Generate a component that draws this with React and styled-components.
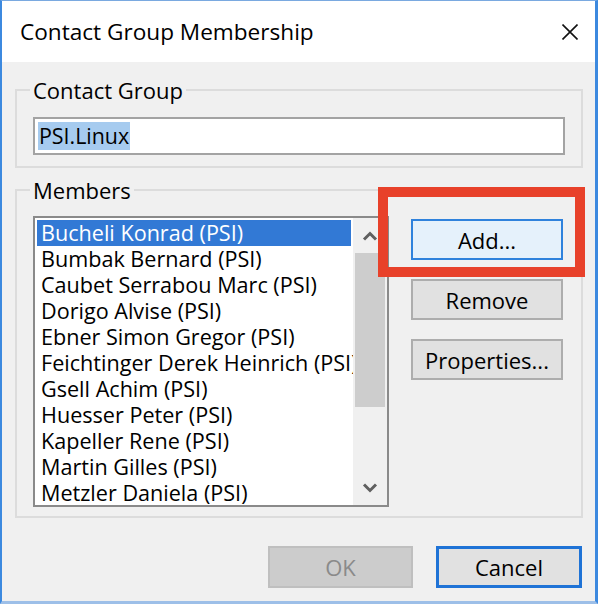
import React from "react";
import styled, { createGlobalStyle } from "styled-components";

const GlobalStyle = createGlobalStyle`
  html, body {
    margin: 0;
    padding: 0;
    background: #f0f0f0;
  }
  body {
    font-family: "Open Sans", "Noto Sans", sans-serif;
  }
`;

const members = [
  "Bucheli Konrad (PSI)",
  "Bumbak Bernard (PSI)",
  "Caubet Serrabou Marc (PSI)",
  "Dorigo Alvise (PSI)",
  "Ebner Simon Gregor (PSI)",
  "Feichtinger Derek Heinrich (PSI)",
  "Gsell Achim (PSI)",
  "Huesser Peter (PSI)",
  "Kapeller Rene (PSI)",
  "Martin Gilles (PSI)",
  "Metzler Daniela (PSI)",
];

const Window = styled.div`
  position: relative;
  box-sizing: border-box;
  width: 598px;
  height: 604px;
  display: flex;
  flex-direction: column;
  background: #f0f0f0;
  border-top: 1px solid #7aa9e0;
  border-left: 2px solid #3c89df;
  border-right: 3px solid #3c89df;
  border-bottom: 3px solid #9dbfe8;
  font-size: 22px;
  color: #000;
`;

const TitleBar = styled.div`
  height: 61px;
  display: flex;
  align-items: center;
  justify-content: space-between;
  padding: 0 17px 0 18px;
  background: #fff;
`;

const Title = styled.span`
  font-size: 22.6px;
  line-height: 24px;
`;

const Body = styled.div`
  flex: 1;
  display: flex;
  flex-direction: column;
  padding: 16px 12px 13px 13px;
`;

const Group = styled.fieldset`
  margin: ${(p) => (p.$gap ? `${p.$gap}px 0 0` : 0)};
  padding: 0 ${(p) => p.$right || 16}px ${(p) => p.$bottom || 11}px 16px;
  border: 2px solid #dcdcdc;
  min-width: 0;
`;

const Legend = styled.legend`
  padding: 0 3px;
  margin-left: -3px;
  line-height: 24px;
`;

const TextBox = styled.div`
  box-sizing: border-box;
  margin-top: 15px;
  height: 38px;
  display: flex;
  align-items: center;
  padding: 0 3px;
  background: #fff;
  border: 2px solid #a3a3a3;
`;

const Selection = styled.span`
  background: #a6cbef;
  font-size: 21.4px;
  line-height: 28px;
  padding: 0 1px;
`;

const MemberRow = styled.div`
  display: flex;
  margin-top: 14px;
  gap: 22px;
`;

const ListBox = styled.div`
  box-sizing: border-box;
  width: 356px;
  height: 291px;
  display: flex;
  background: #fff;
  border: 2px solid #8a8a8a;
`;

const Items = styled.div`
  flex: 1;
  min-width: 0;
  padding: 2px;
  overflow: hidden;
`;

const Item = styled.div`
  height: 26px;
  line-height: 26px;
  padding-left: 4px;
  font-size: 21.6px;
  white-space: nowrap;
  background: ${(p) => (p.$selected ? "#3279d5" : "transparent")};
  color: ${(p) => (p.$selected ? "#fff" : "#000")};
`;

const ScrollBar = styled.div`
  width: 34px;
  display: flex;
  flex-direction: column;
  background: #f0f0f0;
`;

const Arrow = styled.div`
  height: ${(p) => p.$h}px;
  display: flex;
  align-items: center;
  justify-content: center;
`;

const Track = styled.div`
  flex: 1;
  padding: 0 2px;
`;

const Thumb = styled.div`
  height: 154px;
  background: #cdcdcd;
`;

const ButtonColumn = styled.div`
  display: flex;
  flex-direction: column;
  gap: 19px;
  padding-top: 3px;
`;

const Button = styled.button`
  box-sizing: border-box;
  width: ${(p) => p.$w || 152}px;
  height: ${(p) => p.$h || 41}px;
  padding: 0;
  font: inherit;
  font-size: 22px;
  color: ${(p) => (p.disabled ? "#8a8a8a" : "#000")};
  background: ${(p) =>
    p.$hover ? "#e5f1fb" : p.disabled ? "#cccccc" : "#e1e1e1"};
  border: ${(p) =>
    p.$default
      ? "3px solid #1f73d6"
      : p.$hover
      ? "2px solid #2f82dc"
      : p.disabled
      ? "2px solid #bfbfbf"
      : "2px solid #adadad"};
`;

const Footer = styled.div`
  display: flex;
  justify-content: flex-end;
  gap: 23px;
  margin-top: 28px;
  padding-right: 1px;
`;

const Callout = styled.div`
  position: absolute;
  left: 376px;
  top: 186px;
  width: 207px;
  height: 90px;
  box-sizing: border-box;
  border: 10px solid #e8412a;
  pointer-events: none;
`;

const CloseIcon = () => (
  <svg width="16" height="16" viewBox="0 0 16 16">
    <path d="M0.5 0.5 L15.5 15.5 M15.5 0.5 L0.5 15.5" stroke="#111" strokeWidth="1.6" fill="none" />
  </svg>
);

const Chevron = ({ up }) => (
  <svg width="16" height="10" viewBox="0 0 16 10">
    <path
      d={up ? "M2 8.5 L8 2.5 L14 8.5" : "M2 1.5 L8 7.5 L14 1.5"}
      stroke="#606060"
      strokeWidth="3"
      fill="none"
    />
  </svg>
);

export default function App() {
  return (
    <>
      <GlobalStyle />
      <Window>
        <TitleBar>
          <Title>Contact Group Membership</Title>
          <CloseIcon />
        </TitleBar>
        <Body>
          <Group>
            <Legend>Contact Group</Legend>
            <TextBox>
              <Selection>PSI.Linux</Selection>
            </TextBox>
          </Group>
          <Group $gap={10} $right={18} $bottom={9}>
            <Legend>Members</Legend>
            <MemberRow>
              <ListBox>
                <Items>
                  {members.map((m, i) => (
                    <Item key={m} $selected={i === 0}>
                      {m}
                    </Item>
                  ))}
                </Items>
                <ScrollBar>
                  <Arrow $h={35}>
                    <Chevron up />
                  </Arrow>
                  <Track>
                    <Thumb />
                  </Track>
                  <Arrow $h={34}>
                    <Chevron />
                  </Arrow>
                </ScrollBar>
              </ListBox>
              <ButtonColumn>
                <Button $hover>Add...</Button>
                <Button>Remove</Button>
                <Button>Properties...</Button>
              </ButtonColumn>
            </MemberRow>
          </Group>
          <Footer>
            <Button $w={145} $h={42} disabled>
              OK
            </Button>
            <Button $w={146} $h={42} $default>
              Cancel
            </Button>
          </Footer>
        </Body>
        <Callout />
      </Window>
    </>
  );
}
